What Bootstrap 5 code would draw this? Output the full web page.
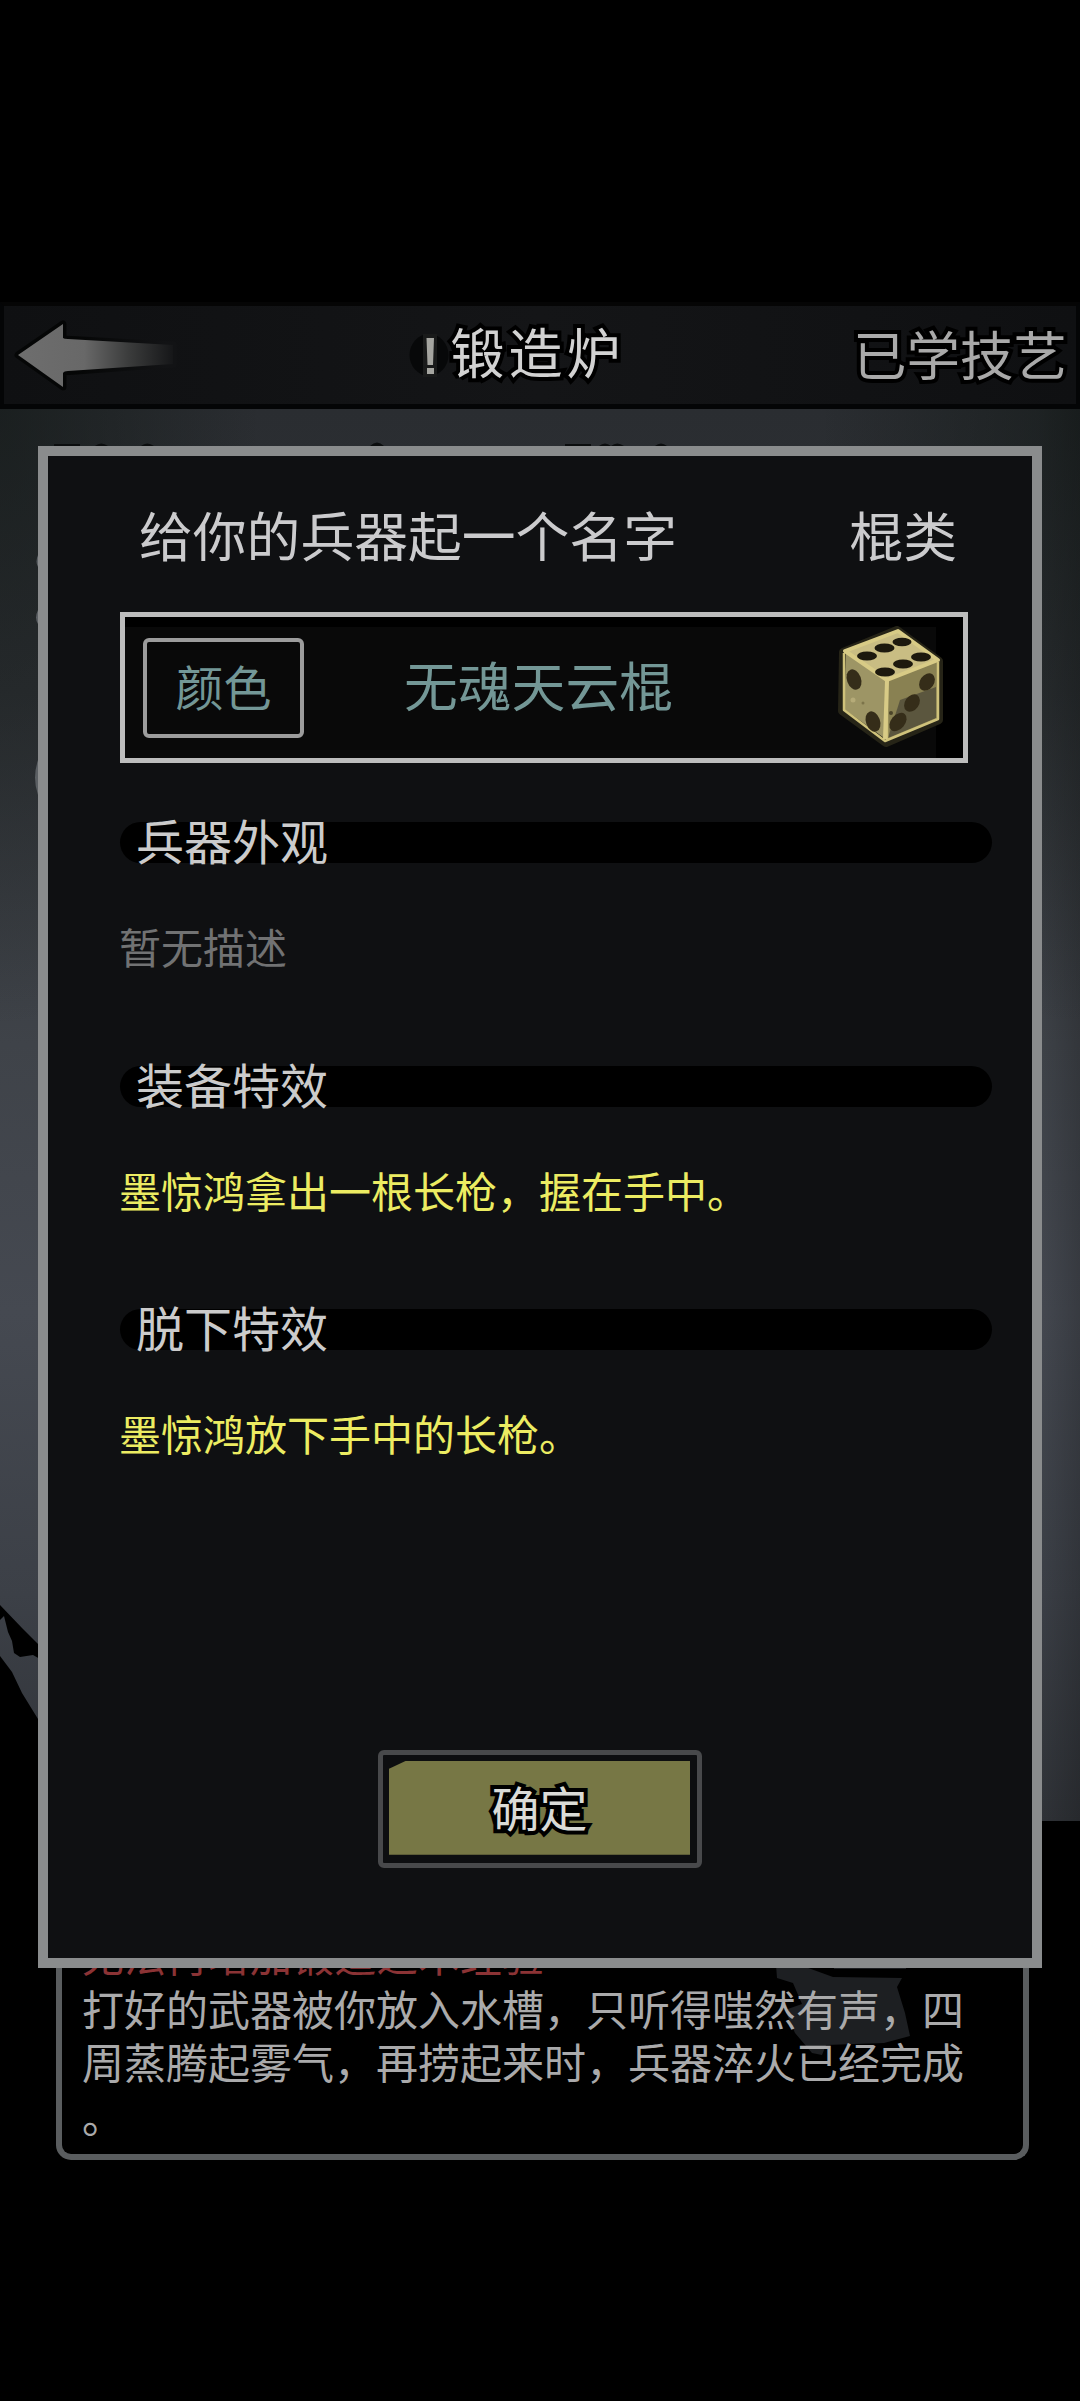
<!DOCTYPE html>
<html lang="zh-CN">
<head>
<meta charset="utf-8">
<meta name="viewport" content="width=device-width, initial-scale=1">
<title>锻造炉</title>
<link href="https://cdn.jsdelivr.net/npm/bootstrap@5.3.0/dist/css/bootstrap.min.css" rel="stylesheet">
<style>
body{background:#000;font-family:"Noto Sans CJK SC",sans-serif;color:#c9c9ca;width:1080px;height:2401px;overflow:hidden}
.game{height:2401px;padding-top:302px}
.topbar{height:107px;border:4px solid #040506;border-top-color:#050505;border-bottom-width:5px;background:linear-gradient(90deg,#0f1012,#141517 50%,#0f1012);padding:0 9px 0 10px}
.topbar>*{flex:1 1 0}
.outlined{paint-order:stroke fill;-webkit-text-stroke:8px #000;stroke-linejoin:round}
.bar-center{padding-right:47px}
.bar-title{font-family:"KaiTi","STKaiti","Noto Sans CJK SC",sans-serif;font-size:54px;line-height:64px;letter-spacing:4px;color:#d2d2d2;padding-bottom:8px}
.skills{font-size:53.5px;line-height:64px;color:#a9a9a9;white-space:nowrap;padding-bottom:4px}
.scene{height:1412px;background:radial-gradient(ellipse 260px 620px at 0 0,rgba(16,22,20,.6),rgba(16,22,20,0)),radial-gradient(ellipse 260px 620px at 100% 0,rgba(16,22,20,.55),rgba(16,22,20,0)),linear-gradient(90deg,rgba(0,0,0,0) 96%,rgba(0,0,0,.2)),linear-gradient(#2a2d31,#2f3236 20%,#3f4349 45%,#454951 64%,#3c4047 84%,#303338)}
.log{margin:-13px 51px 0 56px;height:352px;border:6px solid #5a5d5f;border-top:0;border-radius:0 0 15px 15px;position:relative;z-index:1;padding:119px 0 0 20px}
.log-art{left:0;top:0;z-index:-1}
.log p{font-size:42px;line-height:53.6px;color:#aaaaab;width:890px;white-space:nowrap}
.log .warn{color:#8b3335}
.dialog{left:38px;top:446px;width:1004px;height:1522px;border:10px solid #8a8c8d;background:#0f1012;z-index:5;padding:40px 40px 0 72px}
.heading-row{font-size:53.8px;line-height:76px;padding:0 31px 0 19px;margin-right:4px;color:#cbcbcd}
.name-box{margin-top:40px;width:848px;height:151px;border:5px solid #bdbdbd;background:#000;padding:10px 27px 0 0}
.name-inner{background:#090909;height:131px;padding:0 0 10px 18px}
.color-btn{width:161px;height:100px;border:4.5px solid #9c9c9c;border-radius:6px;font-size:48px;line-height:82px;color:#739796;background:transparent;padding:0 0 6px}
.weapon{font-size:53.8px;line-height:86px;color:#739796;margin-left:100px;padding-bottom:7px;white-space:nowrap}
.dice{width:112px;height:126px;margin-left:auto;margin-right:-12px;margin-bottom:-5px;margin-top:-4px}
.entry{height:243.6px}
.entry-title{width:872px;height:41px;border-radius:21px;background:#000;font-size:48px;line-height:34px;padding-left:16px;color:#cbcbcb}
.entry-text{font-size:42px;line-height:60px;margin:53px 0 0 -1px;color:#717273}
.entry-text.lit{color:#ecec62}
.entries{margin-top:59px}
.ok-btn{width:324px;height:118px;border:5px solid #48494b;border-radius:6px;background:#0d0e10;padding:6px 7px 8px 6px;margin:197px 0 0 258px}
.ok-face{height:94px;background:#777745;clip-path:polygon(17px 0,100% 0,100% 100%,0 100%,0 8px);font-size:48px;line-height:91px;color:#dadbd7;text-align:center}
svg{display:block}
</style>
<script src="https://cdn.jsdelivr.net/npm/bootstrap@5.3.0/dist/js/bootstrap.bundle.min.js"></script>
</head>
<body>
<main class="game position-relative">
  <header class="topbar d-flex align-items-center">
    <a href="#" aria-label="返回">
      <svg width="180" height="76" viewBox="14 317 180 76">
        <defs><linearGradient id="fade" x1="18" x2="176" y1="0" y2="0" gradientUnits="userSpaceOnUse"><stop offset="0" stop-color="#6e6e6e"/><stop offset=".42" stop-color="#686868"/><stop offset=".7" stop-color="#3b3c3c"/><stop offset="1" stop-color="#131416"/></linearGradient>
        <linearGradient id="edge" x1="18" x2="165" y1="0" y2="0" gradientUnits="userSpaceOnUse"><stop offset=".4" stop-color="#050606"/><stop offset="1" stop-color="#121315"/></linearGradient></defs>
        <path d="M18 355 63 324V339L173 345V364L63 372V387Z" fill="none" stroke="url(#edge)" stroke-width="7" stroke-linejoin="round"/>
        <path d="M18 355 63 324V338Q64 339 68 339L173 345V364L68 371Q64 371 63 373V387Z" fill="url(#fade)"/>
      </svg>
    </a>
    <div class="bar-center d-flex align-items-center justify-content-center">
      <svg class="flex-shrink-0" width="41" height="48" viewBox="411 330 41 48">
        <ellipse cx="431" cy="354" rx="19.5" ry="21" fill="#070809"/>
        <path d="M425 333h14v43h-14z" fill="#191a1a"/>
        <path d="M428.500 337h7.500l-1 27h-5.500zM429 367h7v6h-7z" fill="#a5a5a0"/>
      </svg>
      <span class="bar-title outlined flex-shrink-0">锻造炉</span>
    </div>
    <div class="skills outlined text-end">已学技艺</div>
  </header>

  <section class="scene">
    <svg width="1080" height="1412" viewBox="0 409 1080 1412">
      <path d="M54 446v-2h26v2zM95 446q6-5 13 0zM141 446q6-5 13 0zM370 446q7-7 14 0zM565 446v-2h26v2zM599 446q6-5 12 0 6-5 13 0zM655 446q6-5 12 0z" fill="#0b0d0e"/>
      <path d="M38 555q-3 7 0 12zM38 610q-4 8 0 14zM38 760q-6 18 0 35z" fill="#5b5f63"/>
      <path d="M0 1605 22 1628 40 1646V1659L33 1655 20 1657 14 1653 12 1641 8 1632 4 1616 0 1620ZM0 1656 12 1672 22 1693 38 1719V1825H0Z" fill="#000"/>
    </svg>
  </section>

  <section class="log">
    <svg class="log-art position-absolute" width="960" height="340" viewBox="62 1808 960 340">
      <path d="M776 1965H800L833 1977 902 1978 897 1987 905 2013 910 2036 884 2043 826 2045 822 2055 812 2053 795 2033 785 2010 802 2004 793 1983 777 1978ZM834 1968h72v1h-72z" fill="#1d1f22"/>
    </svg>
    <p class="warn m-0">无法再增加锻造之术经验</p>
    <p class="m-0">打好的武器被你放入水槽，只听得嗤然有声，四<br>周蒸腾起雾气，再捞起来时，兵器淬火已经完成<br>。</p>
  </section>

  <section class="dialog position-absolute" role="dialog">
    <div class="heading-row d-flex justify-content-between">
      <span>给你的兵器起一个名字</span><span>棍类</span>
    </div>
    <div class="name-box">
      <div class="name-inner d-flex align-items-center">
        <button class="color-btn">颜色</button>
        <span class="weapon">无魂天云棍</span>
        <svg class="dice" viewBox="836 625 112 126">
          <path d="M843 652 897 630 939 661V720L886 743 842 711Z" fill="#39351f" stroke="#262417" stroke-width="8" stroke-linejoin="round"/>
          <path d="M846 652 887 681V740L844 709Z" fill="#9d9565"/>
          <path d="M887 681 938 661V718L886 741Z" fill="#898152"/>
          <path d="M900 700 936 687V718L888 738Z" fill="#5b563e"/>
          <path d="M845 651 898 631 938 660 887 680Z" fill="#c9bd83" stroke="#d8cb86" stroke-width="4" stroke-linejoin="round"/>
          <path d="M844 653V710L885 741 938 719V662M887 682V739" fill="none" stroke="#cfc27b" stroke-width="2.500" stroke-linejoin="round"/>
          <path d="M887 681 885 739" stroke="#d8cb86" stroke-width="4"/>
          <g fill="#1d190e"><ellipse cx="867" cy="656" rx="10" ry="4.500"/><ellipse cx="884.500" cy="648" rx="10" ry="4.500"/><ellipse cx="902" cy="642" rx="9.500" ry="4.200"/><ellipse cx="885" cy="672" rx="10" ry="4.500"/><ellipse cx="903" cy="664" rx="10" ry="4.500"/><ellipse cx="921" cy="657" rx="10" ry="4.500"/></g>
          <g fill="#352d19"><ellipse cx="854" cy="679.500" rx="7" ry="10.500" transform="rotate(-20 854 679.500)"/><ellipse cx="873" cy="721.500" rx="7" ry="10.500" transform="rotate(-20 873 721.500)"/><ellipse cx="927" cy="682" rx="7" ry="9.500" transform="rotate(35 927 682)"/><ellipse cx="912" cy="703" rx="7" ry="9.500" transform="rotate(35 912 703)"/><ellipse cx="898" cy="722" rx="7" ry="10.500" transform="rotate(40 898 722)"/></g>
          <circle cx="853" cy="700" r="2.500" fill="#b5ab78"/><circle cx="863" cy="703" r="1.500" fill="#7c744a"/><circle cx="891" cy="713" r="2" fill="#4b4429"/>
        </svg>
      </div>
    </div>
    <div class="entries">
      <div class="entry"><div class="entry-title">兵器外观</div><p class="entry-text">暂无描述</p></div>
      <div class="entry"><div class="entry-title">装备特效</div><p class="entry-text lit">墨惊鸿拿出一根长枪，握在手中。</p></div>
      <div class="entry"><div class="entry-title">脱下特效</div><p class="entry-text lit">墨惊鸿放下手中的长枪。</p></div>
    </div>
    <div class="ok-btn"><div class="ok-face"><span class="outlined">确定</span></div></div>
  </section>
</main>
</body>
</html>
